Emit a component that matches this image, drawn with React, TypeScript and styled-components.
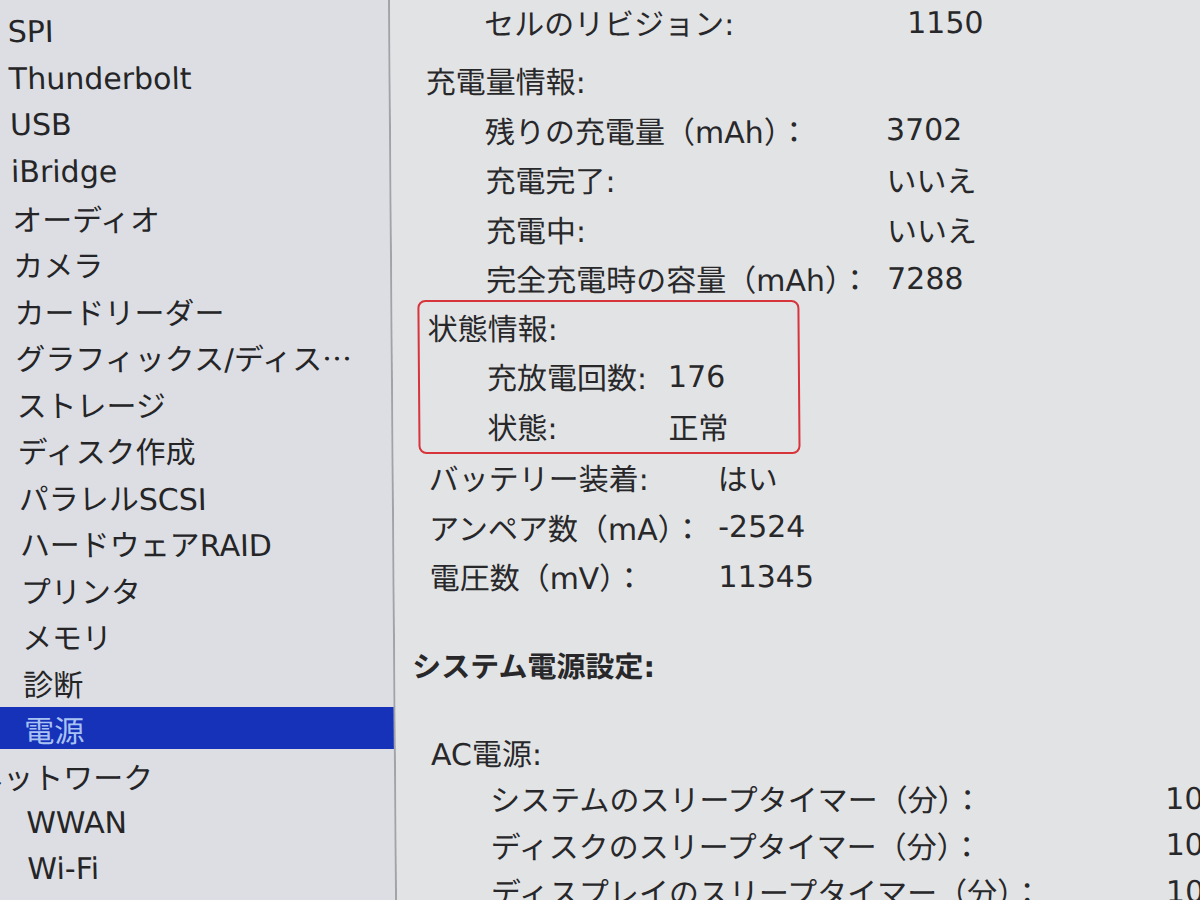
import React from "react";
import styled, { createGlobalStyle } from "styled-components";

const GlobalStyle = createGlobalStyle`
  html, body {
    margin: 0;
    padding: 0;
    overflow: hidden;
    background: #dcdee3;
  }
`;

const FONT = `"DejaVu Sans", "Noto Sans CJK JP", sans-serif`;
const CJK = `"Noto Sans CJK JP", sans-serif`;

const Screen = styled.div`
  width: 1200px;
  height: 900px;
  overflow: hidden;
  background: #dcdee3;
  font-family: ${FONT};
  color: #28282a;
`;

/* the whole window is seen at a slight angle */
const Frame = styled.div`
  display: flex;
  width: 1260px;
  height: 960px;
  margin-left: -20px;
  transform: skewX(0.45deg);
  transform-origin: 20px 0;
`;

const Sidebar = styled.nav`
  flex: none;
  width: 408px;
  height: 100%;
  background: #dcdee3;
  border-right: 2px solid #a2a3a8;
  overflow: hidden;
`;

const SideList = styled.ul`
  list-style: none;
  margin: 0;
  padding: 6.75px 0 0 20px;
  transform: skewX(0.9deg);
  transform-origin: 0 0;
`;

const SideItem = styled.li`
  height: 46.5px;
  padding: 2.25px 0;
  box-sizing: border-box;
  font-size: 30px;
  white-space: nowrap;
`;

const SideLabel = styled.div<{ $depth: number; $selected?: boolean }>`
  height: 100%;
  display: flex;
  align-items: center;
  margin-left: ${(p) => (p.$depth === 0 ? -45 : -40)}px;
  padding-left: ${(p) => (p.$depth === 0 ? 0 : 47)}px;
  padding-top: 3px;
  box-sizing: border-box;
  background: ${(p) => (p.$selected ? "#1632b8" : "transparent")};
  color: ${(p) => (p.$selected ? "#a9c2f4" : "#252527")};
`;

const Ellipsis = styled.span`
  font-family: ${CJK};
`;

const Detail = styled.section`
  flex: none;
  width: 850px;
  height: 100%;
  background: #e2e3e5;
  padding-left: 35px;
  box-sizing: border-box;
  font-size: 30px;
`;

const Group = styled.div<{
  $indent: number;
  $keyWidth: number;
  $rowH?: number;
  $top?: number;
}>`
  display: grid;
  grid-template-columns: ${(p) => p.$keyWidth}px auto;
  grid-auto-rows: ${(p) => p.$rowH ?? 49.5}px;
  align-items: center;
  padding-left: ${(p) => p.$indent}px;
  margin-top: ${(p) => p.$top ?? 0}px;
  white-space: nowrap;
`;

const Key = styled.span``;
const Value = styled.span``;

const Heading = styled.div<{ $top?: number }>`
  height: 49.5px;
  display: flex;
  align-items: center;
  margin-top: ${(p) => p.$top ?? 0}px;
  white-space: nowrap;
`;

const SectionTitle = styled.div<{ $top: number }>`
  height: 49.5px;
  display: flex;
  align-items: center;
  margin-top: ${(p) => p.$top}px;
  margin-left: -18px;
  font-size: 29px;
  font-weight: 700;
  white-space: nowrap;
`;

const Callout = styled.div`
  width: 382px;
  margin: -3px 0 -2px -10px;
  padding: 0 0 2px 8px;
  border: 2px solid #d8343c;
  border-radius: 8px;
  box-sizing: border-box;
`;

type Row = [string, string];

const sideItems: { label: React.ReactNode; depth: number; selected?: boolean }[] = [
  { label: "SPI", depth: 1 },
  { label: "Thunderbolt", depth: 1 },
  { label: "USB", depth: 1 },
  { label: "iBridge", depth: 1 },
  { label: "オーディオ", depth: 1 },
  { label: "カメラ", depth: 1 },
  { label: "カードリーダー", depth: 1 },
  {
    label: (
      <>
        グラフィックス/ディス<Ellipsis>…</Ellipsis>
      </>
    ),
    depth: 1,
  },
  { label: "ストレージ", depth: 1 },
  { label: "ディスク作成", depth: 1 },
  { label: "パラレルSCSI", depth: 1 },
  { label: "ハードウェアRAID", depth: 1 },
  { label: "プリンタ", depth: 1 },
  { label: "メモリ", depth: 1 },
  { label: "診断", depth: 1 },
  { label: "電源", depth: 1, selected: true },
  { label: "ネットワーク", depth: 0 },
  { label: "WWAN", depth: 1 },
  { label: "Wi-Fi", depth: 1 },
];

const chargeRows: Row[] = [
  ["残りの充電量（mAh）：", "3702"],
  ["充電完了:", "いいえ"],
  ["充電中:", "いいえ"],
  ["完全充電時の容量（mAh）：", "7288"],
];

const healthRows: Row[] = [
  ["充放電回数:", "176"],
  ["状態:", "正常"],
];

const batteryRows: Row[] = [
  ["バッテリー装着:", "はい"],
  ["アンペア数（mA）：", "-2524"],
  ["電圧数（mV）：", "11345"],
];

const acRows: Row[] = [
  ["システムのスリープタイマー（分）：", "10"],
  ["ディスクのスリープタイマー（分）：", "10"],
  ["ディスプレイのスリープタイマー（分）：", "10"],
];

const Rows = ({ rows }: { rows: Row[] }) => (
  <>
    {rows.map(([k, v]) => (
      <React.Fragment key={k}>
        <Key>{k}</Key>
        <Value>{v}</Value>
      </React.Fragment>
    ))}
  </>
);

export default function App() {
  return (
    <Screen>
      <GlobalStyle />
      <Frame>
        <Sidebar>
          <SideList>
            {sideItems.map((item, i) => (
              <SideItem key={i}>
                <SideLabel $depth={item.depth} $selected={item.selected}>
                  {item.label}
                </SideLabel>
              </SideItem>
            ))}
          </SideList>
        </Sidebar>
        <Detail>
          <Group $indent={59} $keyWidth={423} $top={-2.75}>
            <Rows rows={[["セルのリビジョン:", "1150"]]} />
          </Group>
          <Heading $top={8.5}>充電量情報:</Heading>
          <Group $indent={59} $keyWidth={401}>
            <Rows rows={chargeRows} />
          </Group>
          <Callout>
            <Heading>状態情報:</Heading>
            <Group $indent={59} $keyWidth={181}>
              <Rows rows={healthRows} />
            </Group>
          </Callout>
          <Group $indent={0} $keyWidth={289}>
            <Rows rows={batteryRows} />
          </Group>
          <SectionTitle $top={38.75}>システム電源設定:</SectionTitle>
          <Heading $top={38.5}>AC電源:</Heading>
          <Group $indent={59} $keyWidth={675} $rowH={46.5} $top={-2}>
            <Rows rows={acRows} />
          </Group>
        </Detail>
      </Frame>
    </Screen>
  );
}
